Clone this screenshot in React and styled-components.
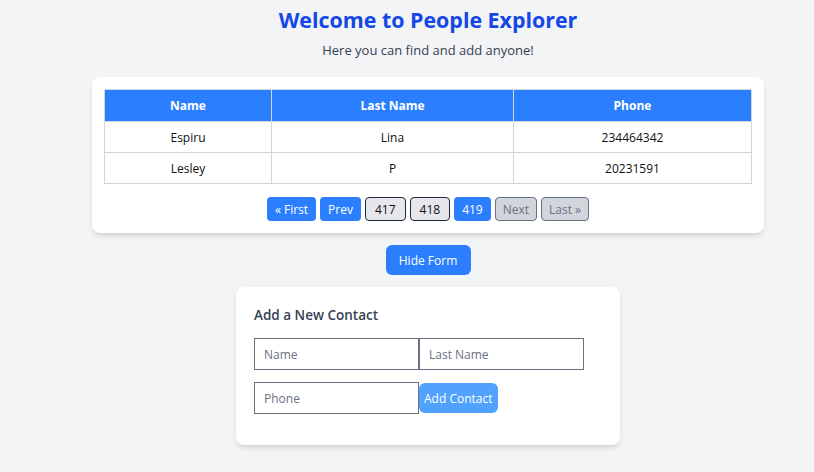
import React from "react";
import styled, { createGlobalStyle } from "styled-components";

const FONT = `"Open Sans", "Noto Sans", sans-serif`;

const Global = createGlobalStyle`
  * { box-sizing: border-box; }
  html, body { margin: 0; padding: 0; }
  body { background: #f3f4f6; font-family: ${FONT}; color: #101828; }
`;

const Page = styled.main`
  display: flex;
  flex-direction: column;
  align-items: center;
  padding: 4px 0 28px 42px;
`;

const Title = styled.h1`
  margin: 0;
  font-size: 21.4px;
  line-height: 32px;
  font-weight: 700;
  color: #1447e6;
`;

const Subtitle = styled.p`
  margin: 4px 0 0;
  font-size: 13px;
  line-height: 20px;
  color: #364153;
`;

const Card = styled.section`
  width: ${(p) => p.$width}px;
  margin-top: ${(p) => p.$mt}px;
  background: #fff;
  border-radius: 8px;
  box-shadow: 0 4px 6px -1px rgba(0,0,0,0.1), 0 2px 4px -2px rgba(0,0,0,0.1);
  padding: ${(p) => p.$pad};
`;

const Table = styled.table`
  width: 100%;
  border-collapse: collapse;
  font-size: 12px;
`;

const Th = styled.th`
  background: #2b7fff;
  color: #fff;
  font-weight: 700;
  height: 32px;
  padding: 0 8px;
  border: 1px solid #d1d5dc;
  width: ${(p) => p.$w};
`;

const Td = styled.td`
  height: 31px;
  padding: 0 8px;
  text-align: center;
  border: 1px solid #d1d5dc;
  color: #101010;
`;

const Pager = styled.div`
  display: flex;
  justify-content: center;
  gap: 4px;
  margin-top: 13px;
`;

const PageBtn = styled.button`
  font-family: ${FONT};
  font-size: 12px;
  height: 24px;
  padding: 0 ${(p) => (p.$variant === "number" ? 9 : 7)}px;
  border-radius: 4px;
  cursor: pointer;
  border: 1px solid transparent;
  background: #2b7fff;
  color: #fff;
  ${(p) =>
    p.$variant === "number" &&
    `background:#e5e7eb;color:#101010;border-color:#1e2939;`}
  ${(p) =>
    p.$variant === "disabled" &&
    `background:#d1d5dc;color:#6a7282;border-color:#6a7282;cursor:default;`}
`;

const ToggleBtn = styled.button`
  margin-top: 12px;
  height: 30px;
  width: 85px;
  border: none;
  border-radius: 6px;
  background: #2b7fff;
  color: #fff;
  font-family: ${FONT};
  font-size: 12px;
`;

const FormTitle = styled.h2`
  margin: 0 0 13px;
  font-size: 13.5px;
  line-height: 20px;
  font-weight: 600;
  color: #364153;
`;

const Form = styled.form`
  display: flex;
  flex-wrap: wrap;
  row-gap: 12px;
  width: 330px;
`;

const Input = styled.input`
  width: 165px;
  height: 32px;
  border: 1px solid #6a7282;
  padding: 0 9px;
  font-family: ${FONT};
  font-size: 12px;
  background: #fff;
  &::placeholder { color: #6a7282; }
`;

const Submit = styled.button`
  height: 30px;
  margin-top: 1px;
  padding: 0 5px;
  border: none;
  border-radius: 6px;
  background: #51a2ff;
  color: #fff;
  font-family: ${FONT};
  font-size: 12px;
`;

const rows = [
  ["Espiru", "Lina", "234464342"],
  ["Lesley", "P", "20231591"],
];

export default function App() {
  return (
    <>
      <Global />
      <Page>
        <Title>Welcome to People Explorer</Title>
        <Subtitle>Here you can find and add anyone!</Subtitle>
        <Card $width={672} $mt={17} $pad="12px">
          <Table>
            <thead>
              <tr>
                <Th $w="167px">Name</Th>
                <Th $w="242px">Last Name</Th>
                <Th>Phone</Th>
              </tr>
            </thead>
            <tbody>
              {rows.map((r) => (
                <tr key={r[0]}>
                  {r.map((c, i) => (
                    <Td key={i}>{c}</Td>
                  ))}
                </tr>
              ))}
            </tbody>
          </Table>
          <Pager>
            <PageBtn>« First</PageBtn>
            <PageBtn>Prev</PageBtn>
            <PageBtn $variant="number">417</PageBtn>
            <PageBtn $variant="number">418</PageBtn>
            <PageBtn>419</PageBtn>
            <PageBtn $variant="disabled">Next</PageBtn>
            <PageBtn $variant="disabled">Last »</PageBtn>
          </Pager>
        </Card>
        <ToggleBtn>Hide Form</ToggleBtn>
        <Card $width={384} $mt={12} $pad="18px 18px 31px">
          <FormTitle>Add a New Contact</FormTitle>
          <Form onSubmit={(e) => e.preventDefault()}>
            <Input placeholder="Name" />
            <Input placeholder="Last Name" />
            <Input placeholder="Phone" />
            <Submit type="submit">Add Contact</Submit>
          </Form>
        </Card>
      </Page>
    </>
  );
}
